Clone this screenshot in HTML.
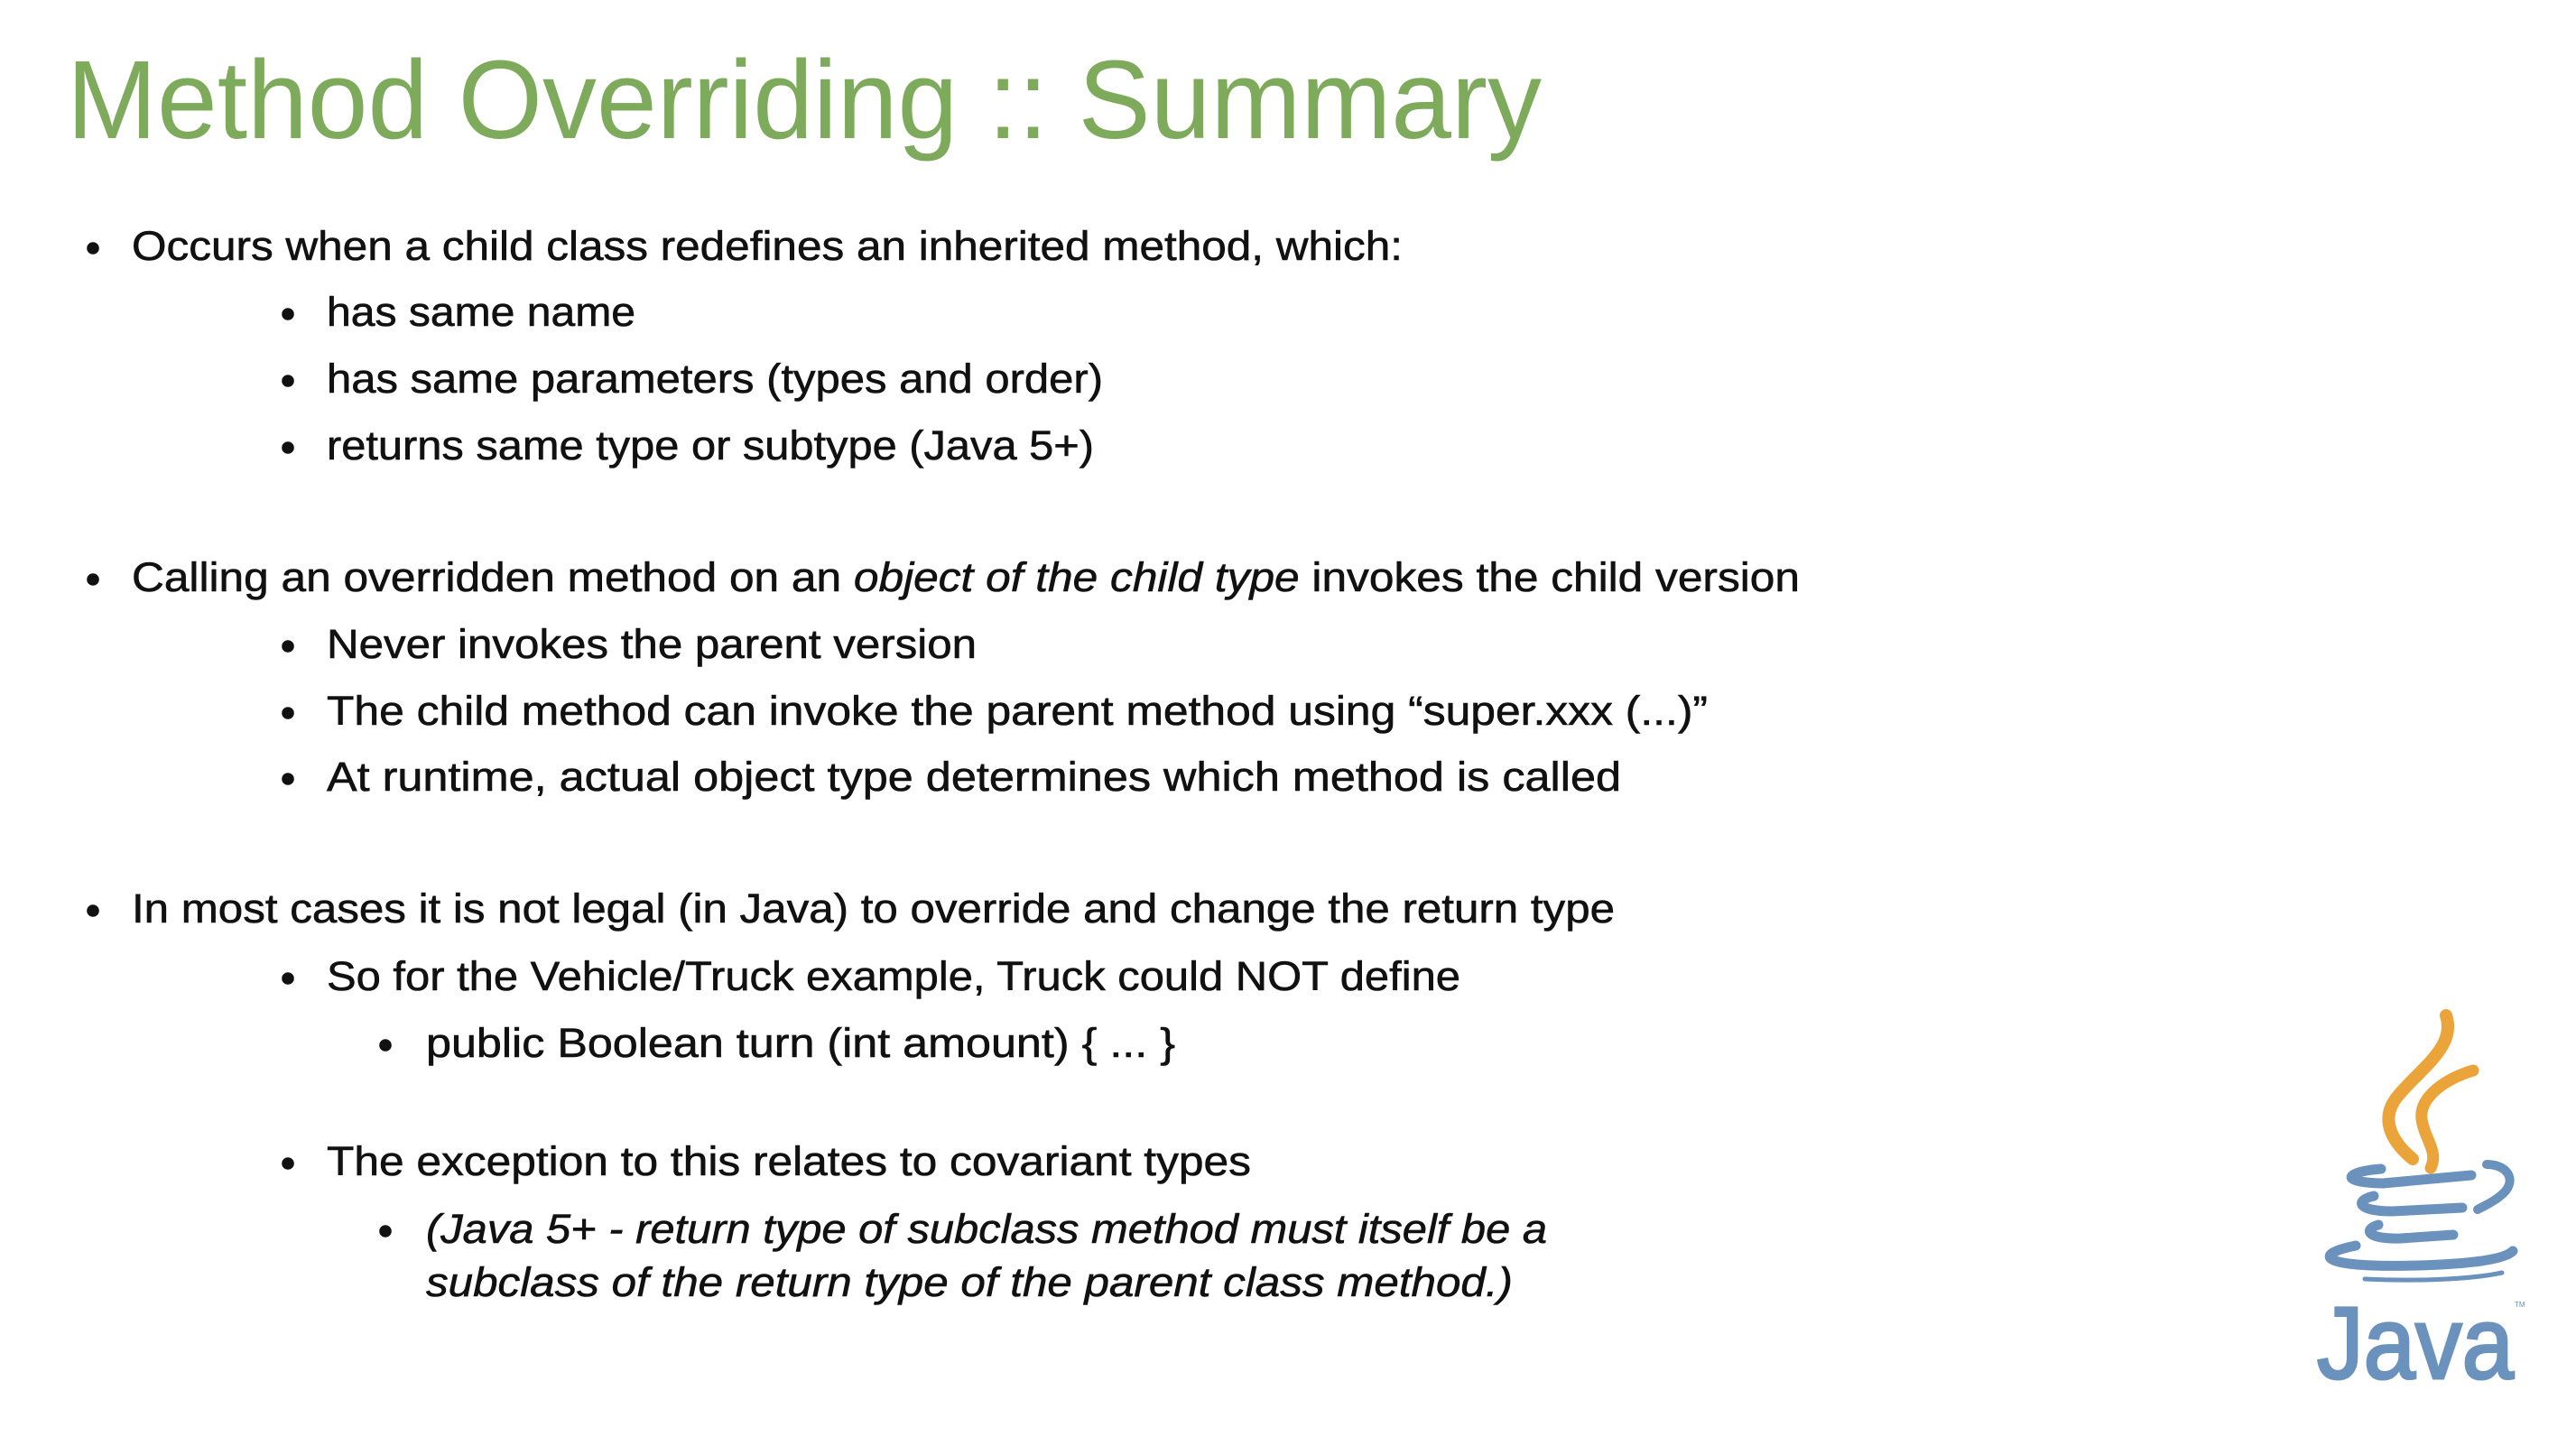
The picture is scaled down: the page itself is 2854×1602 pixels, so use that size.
<!DOCTYPE html>
<html><head><meta charset="utf-8"><style>
html,body{margin:0;padding:0;background:#fff;}
svg{display:block;}
.b{font-family:"Liberation Sans",sans-serif;font-size:45px;fill:#111;stroke:#111;stroke-width:0.6px;}
</style></head><body>
<svg width="2854" height="1602" viewBox="0 0 2854 1602" xmlns="http://www.w3.org/2000/svg">
<rect width="2854" height="1602" fill="#fff"/>
<text x="74" y="153" font-family="Liberation Sans, sans-serif" font-size="123" fill="#7eab5b" textLength="1634" lengthAdjust="spacingAndGlyphs">Method Overriding :: Summary</text>
<g class="b">
<circle cx="103" cy="275" r="6.5" fill="#111"/>
<text x="146" y="288" textLength="1408" lengthAdjust="spacingAndGlyphs">Occurs when a child class redefines an inherited method, which:</text>
<circle cx="319" cy="348" r="6.5" fill="#111"/>
<text x="362" y="361" textLength="342" lengthAdjust="spacingAndGlyphs">has same name</text>
<circle cx="319" cy="422" r="6.5" fill="#111"/>
<text x="362" y="435" textLength="860" lengthAdjust="spacingAndGlyphs">has same parameters (types and order)</text>
<circle cx="319" cy="496" r="6.5" fill="#111"/>
<text x="362" y="509" textLength="850" lengthAdjust="spacingAndGlyphs">returns same type or subtype (Java 5+)</text>

<circle cx="103" cy="642" r="6.5" fill="#111"/>
<text x="146" y="655" textLength="1848" lengthAdjust="spacingAndGlyphs">Calling an overridden method on an <tspan font-style="italic">object of the child type</tspan> invokes the child version</text>
<circle cx="319" cy="716" r="6.5" fill="#111"/>
<text x="362" y="729" textLength="720" lengthAdjust="spacingAndGlyphs">Never invokes the parent version</text>
<circle cx="319" cy="790" r="6.5" fill="#111"/>
<text x="362" y="803" textLength="1530" lengthAdjust="spacingAndGlyphs">The child method can invoke the parent method using “super.xxx (...)”</text>
<circle cx="319" cy="863" r="6.5" fill="#111"/>
<text x="362" y="876" textLength="1434" lengthAdjust="spacingAndGlyphs">At runtime, actual object type determines which method is called</text>

<circle cx="103" cy="1009" r="6.5" fill="#111"/>
<text x="146" y="1022" textLength="1643" lengthAdjust="spacingAndGlyphs">In most cases it is not legal (in Java) to override and change the return type</text>
<circle cx="319" cy="1084" r="6.5" fill="#111"/>
<text x="362" y="1097" textLength="1256" lengthAdjust="spacingAndGlyphs">So for the Vehicle/Truck example, Truck could NOT define</text>
<circle cx="427" cy="1158" r="6.5" fill="#111"/>
<text x="472" y="1171" textLength="830" lengthAdjust="spacingAndGlyphs">public Boolean turn (int amount) { ... }</text>

<circle cx="319" cy="1289" r="6.5" fill="#111"/>
<text x="362" y="1302" textLength="1024" lengthAdjust="spacingAndGlyphs">The exception to this relates to covariant types</text>
<circle cx="427" cy="1364" r="6.5" fill="#111"/>
<text x="472" y="1377" font-style="italic" textLength="1242" lengthAdjust="spacingAndGlyphs">(Java 5+ - return type of subclass method must itself be a</text>
<text x="472" y="1436" font-style="italic" textLength="1204" lengthAdjust="spacingAndGlyphs">subclass of the return type of the parent class method.)</text>
</g>

<!-- Java logo -->
<g fill="none" stroke-linecap="round">
<path d="M2710 1125 C2722 1160 2680 1185 2656 1215 C2636 1240 2650 1265 2673 1284" stroke="#eaa43a" stroke-width="14"/>
<path d="M2740 1186 C2710 1195 2680 1215 2683 1240 C2686 1262 2702 1275 2693 1294" stroke="#eaa43a" stroke-width="13"/>
<g stroke="#6a92bd">
<path d="M2638 1295 C2598 1298 2590 1310 2640 1311 L2738 1302" stroke-width="11"/>
<path d="M2755 1290 C2780 1290 2790 1310 2770 1325 C2762 1332 2752 1336 2745 1340" stroke-width="10"/>
<path d="M2630 1325 C2608 1330 2612 1342 2650 1342 L2728 1338" stroke-width="11"/>
<path d="M2635 1357 C2618 1362 2622 1373 2660 1372 L2718 1368" stroke-width="11"/>
<path d="M2610 1380 C2560 1390 2570 1405 2680 1402 C2740 1400 2775 1395 2784 1386" stroke-width="11"/>
<path d="M2620 1417 C2680 1420 2740 1417 2772 1410" stroke-width="5"/>
</g>
</g>
<text x="2567" y="1527" font-family="Liberation Sans, sans-serif" font-size="113" fill="#6a92bd" stroke="#6a92bd" stroke-width="3" textLength="218" lengthAdjust="spacingAndGlyphs">Java</text>
<text x="2786" y="1448" font-family="Liberation Sans, sans-serif" font-size="8" fill="#6a92bd">TM</text>
</svg>
</body></html>
